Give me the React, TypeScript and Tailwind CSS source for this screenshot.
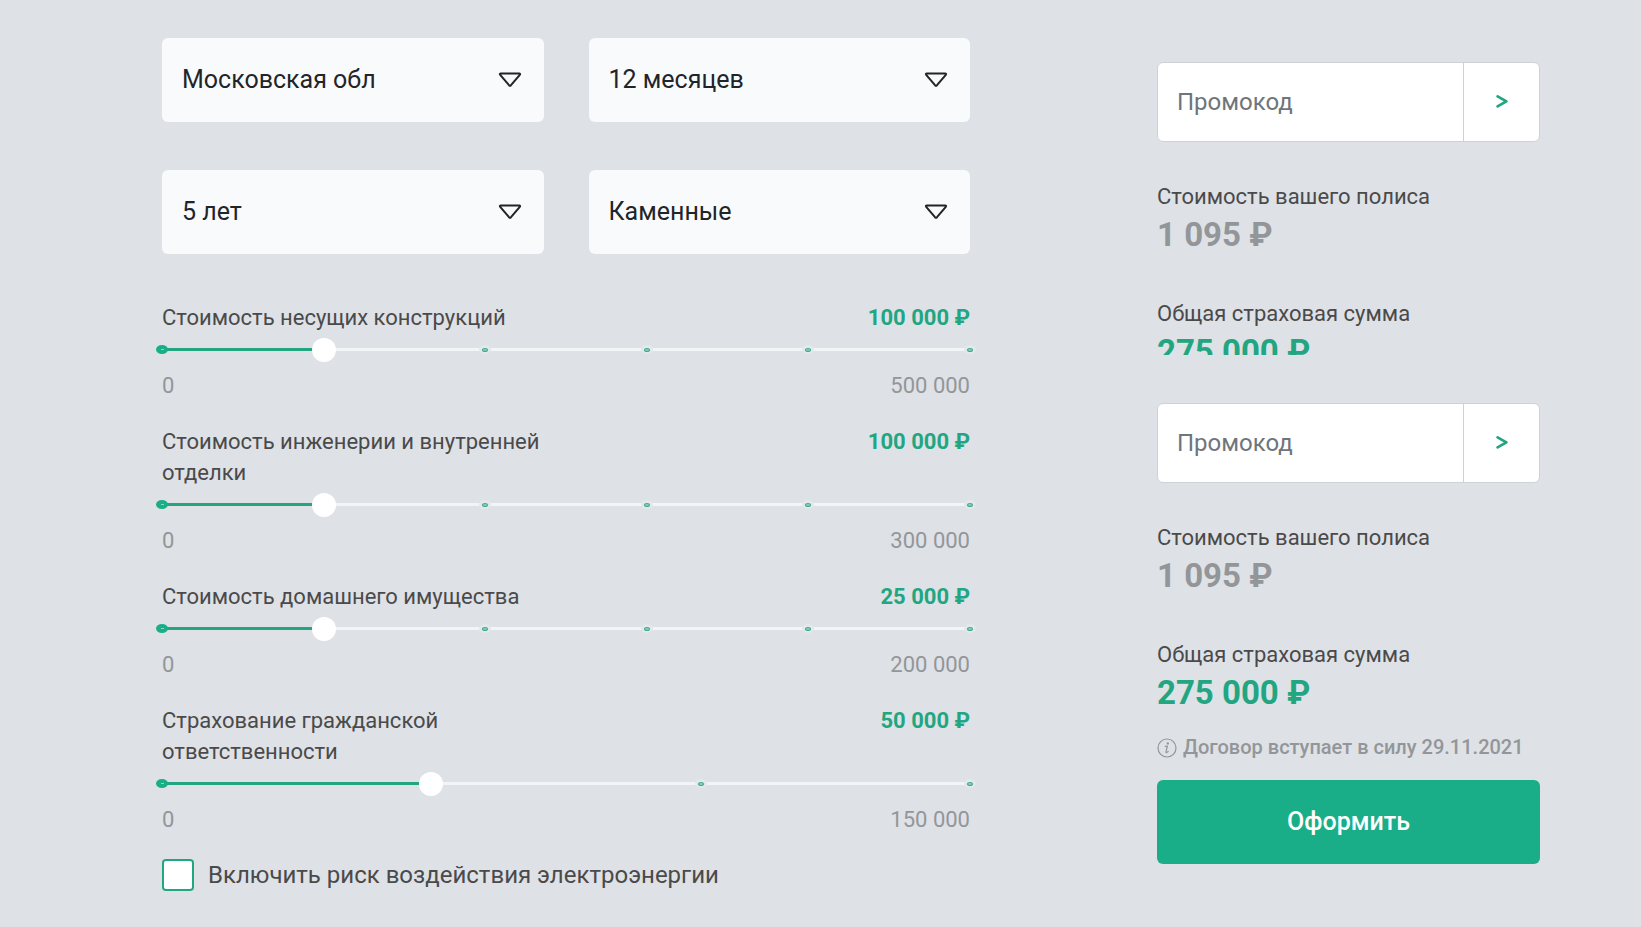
import React, { useId, useState } from 'react';

interface SelectFieldProps {
  label: string;
  options: string[];
}

interface CoverageSliderProps {
  label: string;
  steps: string[];
  initial: number;
}

const selects: SelectFieldProps[] = [
  { label: 'Регион', options: ['Московская обл', 'Москва', 'Тверская обл'] },
  { label: 'Срок страхования', options: ['12 месяцев', '6 месяцев', '3 месяца'] },
  { label: 'Возраст дома', options: ['5 лет', '10 лет', '20 лет'] },
  { label: 'Материал стен', options: ['Каменные', 'Деревянные'] },
];

const coverages: CoverageSliderProps[] = [
  {
    label: 'Стоимость несущих конструкций',
    steps: ['0', '100 000', '200 000', '300 000', '400 000', '500 000'],
    initial: 1,
  },
  {
    label: 'Стоимость инженерии и внутренней отделки',
    steps: ['0', '100 000', '150 000', '200 000', '250 000', '300 000'],
    initial: 1,
  },
  {
    label: 'Стоимость домашнего имущества',
    steps: ['0', '25 000', '50 000', '100 000', '150 000', '200 000'],
    initial: 1,
  },
  {
    label: 'Страхование гражданской ответственности',
    steps: ['0', '50 000', '100 000', '150 000'],
    initial: 1,
  },
];

const SelectField: React.FC<SelectFieldProps> = ({ label, options }) => (
  <div className="relative">
    <select
      aria-label={label}
      className="h-[84px] w-full appearance-none rounded-md bg-[#f9fafc] pr-16 pl-5 text-[25px] text-[#212529] outline-none"
    >
      {options.map((option) => (
        <option key={option}>{option}</option>
      ))}
    </select>
    <svg
      className="pointer-events-none absolute inset-y-0 right-[22px] my-auto"
      width="24"
      height="18"
      viewBox="0 0 24 18"
      fill="none"
      stroke="#212529"
      strokeWidth="2"
      strokeLinejoin="round"
    >
      <path d="M2.6 2.4H21.4Q22.6 2.6 21.8 3.8L13 14.2Q12 15.2 11 14.2L2.2 3.8Q1.4 2.6 2.6 2.4Z" />
    </svg>
  </div>
);

const CoverageSlider: React.FC<CoverageSliderProps> = ({ label, steps, initial }) => {
  const [value, setValue] = useState(initial);
  const id = useId();
  const last = steps.length - 1;

  return (
    <div>
      <div className="flex justify-between text-[22px] leading-[31px]">
        <label htmlFor={id} className="w-1/2 text-[#4a4a4a]">
          {label}
        </label>
        <output htmlFor={id} className="font-bold text-[#22a681]">
          {steps[value]} ₽
        </output>
      </div>

      <div className="relative flex h-[33px] items-center">
        <div className="h-[3px] w-full bg-[#f3f4f6]">
          <div className="h-full bg-[#22a681]" style={{ width: `${(value / last) * 100}%` }} />
        </div>
        {steps.map((step, i) => (
          <span
            key={step}
            className="absolute flex h-[9px] w-3 -translate-x-1/2 items-center justify-center"
            style={{ left: `${(i / last) * 100}%` }}
          >
            {i <= value ? (
              <span className="flex h-full w-full items-center justify-center rounded-[50%] bg-[#1aae88]">
                <span className="h-px w-[3px] bg-[#8fd3c0]" />
              </span>
            ) : (
              <span className="flex h-full w-full items-center justify-center rounded-[50%] bg-[#e1e9ea]">
                <span className="h-1 w-1.5 rounded-[50%] border border-[#45ab90] bg-[#8cc9b9]" />
              </span>
            )}
          </span>
        ))}
        {/* wider than the track by half a thumb on each side, so the thumb centre meets the ticks */}
        <input
          id={id}
          type="range"
          min={0}
          max={last}
          value={value}
          onChange={(e) => setValue(Number(e.target.value))}
          aria-valuetext={`${steps[value]} ₽`}
          className="absolute inset-y-0 -left-3 w-[calc(100%+24px)] cursor-pointer appearance-none bg-transparent [&::-webkit-slider-thumb]:size-6 [&::-webkit-slider-thumb]:appearance-none [&::-webkit-slider-thumb]:rounded-full [&::-webkit-slider-thumb]:bg-white"
        />
      </div>

      <div className="flex justify-between pt-1 text-[22px] leading-[31px] text-[#939699]">
        <span>{steps[0]}</span>
        <span>{steps[last]}</span>
      </div>
    </div>
  );
};

const PromoForm: React.FC = () => (
  <form
    onSubmit={(e) => e.preventDefault()}
    className="flex h-20 overflow-hidden rounded-md border border-[#ced1d6] bg-white"
  >
    <input
      type="text"
      aria-label="Промокод"
      placeholder="Промокод"
      className="min-w-0 flex-1 px-[19px] text-2xl outline-none placeholder:text-[#6f757b]"
    />
    <button
      type="submit"
      aria-label="Применить"
      className="flex w-[76px] items-center justify-center border-l border-[#ced1d6] text-[#22a681]"
    >
      <svg
        width="14"
        height="16"
        viewBox="0 0 14 16"
        fill="none"
        stroke="currentColor"
        strokeWidth="2.8"
        strokeLinecap="round"
        strokeLinejoin="round"
      >
        <path d="M2.6 2.4L11.4 7.4L2.6 12.4" />
      </svg>
    </button>
  </form>
);

const Totals: React.FC = () => (
  <dl className="mt-[39px]">
    <dt className="text-[22px] leading-[31px] text-[#4a4a4a]">Стоимость вашего полиса</dt>
    <dd className="text-[33px] leading-[46px] font-bold text-[#939699]">1 095 ₽</dd>
    <dt className="mt-10 text-[22px] leading-[31px] text-[#4a4a4a]">Общая страховая сумма</dt>
    <dd className="text-[33px] leading-[46px] font-bold text-[#22a681]">275 000 ₽</dd>
  </dl>
);

const App: React.FC = () => {
  return (
    <main className="grid min-h-screen grid-cols-[minmax(0,808fr)_minmax(0,383fr)] items-start gap-x-[187px] bg-[#dee1e6] pt-[38px] pr-[101px] pb-9 pl-[162px] font-['Roboto',sans-serif]">
      <section>
        <div className="grid grid-cols-2 gap-x-[45px] gap-y-12">
          {selects.map((field) => (
            <SelectField key={field.label} {...field} />
          ))}
        </div>

        <div className="mt-12 flex flex-col gap-[25px]">
          {coverages.map((coverage) => (
            <CoverageSlider key={coverage.label} {...coverage} />
          ))}
        </div>

        <label className="mt-6 flex items-center gap-3.5 text-2xl leading-8 text-[#4a4a4a]">
          <input
            type="checkbox"
            className="size-8 shrink-0 appearance-none rounded border-2 border-[#22a681] bg-white checked:bg-[#22a681]"
          />
          Включить риск воздействия электроэнергии
        </label>
      </section>

      <aside className="pt-6">
        {/* collapsed summary, cut off under the total */}
        <div className="h-[293px] overflow-hidden">
          <PromoForm />
          <Totals />
        </div>

        <div className="mt-12">
          <PromoForm />
          <Totals />
          <p className="mt-4 flex items-center gap-1.5 text-xl leading-[31px] font-medium text-[#939699]">
            <svg
              width="20"
              height="20"
              viewBox="0 0 20 20"
              fill="none"
              stroke="currentColor"
              strokeWidth="1.2"
              className="shrink-0"
            >
              <circle cx="10" cy="10" r="9" />
              <path d="M8.2 8.4L10.4 8L9 13.6Q8.8 15 10 14.4L11.2 13.4" strokeLinecap="round" strokeLinejoin="round" />
              <circle cx="10.8" cy="5.4" r="0.6" fill="currentColor" />
            </svg>
            Договор вступает в силу 29.11.2021
          </p>
          <button
            type="button"
            className="mt-[17px] h-[84px] w-full rounded-md bg-[#1aae88] text-[25px] font-medium text-white"
          >
            Оформить
          </button>
        </div>
      </aside>
    </main>
  );
};

export default App;
